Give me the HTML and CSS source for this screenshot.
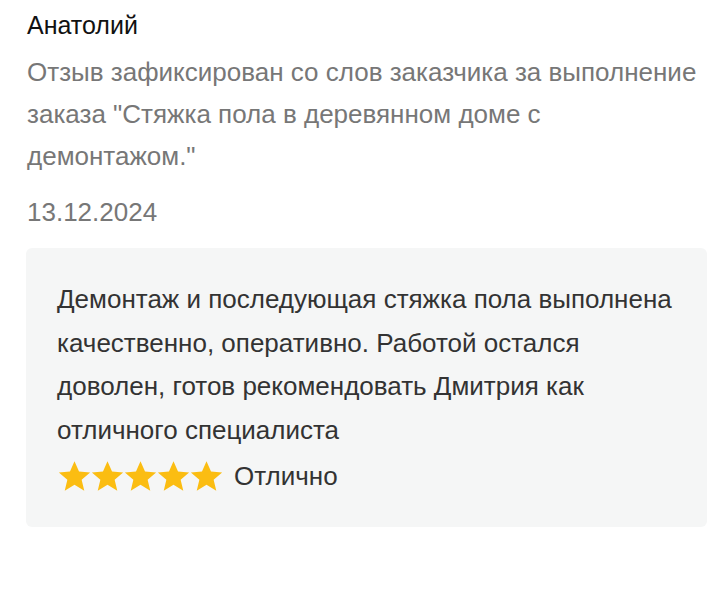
FILE: index.html
```html
<!DOCTYPE html>
<html lang="ru">
<head>
<meta charset="utf-8">
<link rel="stylesheet" href="styles.css">
</head>
<body>
<div class="review">
  <div class="name">Анатолий</div>
  <div class="note">Отзыв зафиксирован со слов заказчика за выполнение заказа "Стяжка пола в деревянном доме с демонтажом."</div>
  <div class="date">13.12.2024</div>
  <div class="card">
    <div class="text">Демонтаж и последующая стяжка пола выполнена качественно, оперативно. Работой остался доволен, готов рекомендовать Дмитрия как отличного специалиста</div>
    <div class="rating">
      <div class="stars">
        <svg class="star" viewBox="0 0 24 24"><path d="M12 1.5l3.1 7.1 7.6.6-5.8 5 1.8 7.5L12 17.7l-6.7 4 1.8-7.5-5.8-5 7.6-.6z"/></svg>
        <svg class="star" viewBox="0 0 24 24"><path d="M12 1.5l3.1 7.1 7.6.6-5.8 5 1.8 7.5L12 17.7l-6.7 4 1.8-7.5-5.8-5 7.6-.6z"/></svg>
        <svg class="star" viewBox="0 0 24 24"><path d="M12 1.5l3.1 7.1 7.6.6-5.8 5 1.8 7.5L12 17.7l-6.7 4 1.8-7.5-5.8-5 7.6-.6z"/></svg>
        <svg class="star" viewBox="0 0 24 24"><path d="M12 1.5l3.1 7.1 7.6.6-5.8 5 1.8 7.5L12 17.7l-6.7 4 1.8-7.5-5.8-5 7.6-.6z"/></svg>
        <svg class="star" viewBox="0 0 24 24"><path d="M12 1.5l3.1 7.1 7.6.6-5.8 5 1.8 7.5L12 17.7l-6.7 4 1.8-7.5-5.8-5 7.6-.6z"/></svg>
      </div>
      <span class="label">Отлично</span>
    </div>
  </div>
</div>
</body>
</html>
```
FILE: styles.css
```css
html, body {
  margin: 0;
  padding: 0;
  background: #ffffff;
}
body {
  font-family: "Liberation Sans", Arial, sans-serif;
}
.review {
  padding: 11px 21px 0 26px;
}
.name {
  font-size: 25px;
  line-height: 28px;
  color: #111111;
  padding-left: 1px;
}
.note {
  font-size: 26px;
  line-height: 42px;
  color: #777777;
  padding-left: 1px;
  margin-top: 12px;
}
.date {
  font-size: 26px;
  line-height: 42px;
  color: #777777;
  padding-left: 1px;
  margin-top: 14px;
}
.card {
  margin-top: 15px;
  background: #f5f6f6;
  border-radius: 6px;
  padding: 30px 30px 27px 31px;
}
.text {
  font-size: 26px;
  line-height: 43.5px;
  color: #333333;
}
.rating {
  display: flex;
  align-items: center;
  gap: 12px;
  height: 48px;
}
.stars {
  display: flex;
}
.star {
  width: 35px;
  height: 35px;
  margin-right: -2px;
  fill: #fbbd12;
}
.label {
  font-size: 26px;
  color: #333333;
}
```
